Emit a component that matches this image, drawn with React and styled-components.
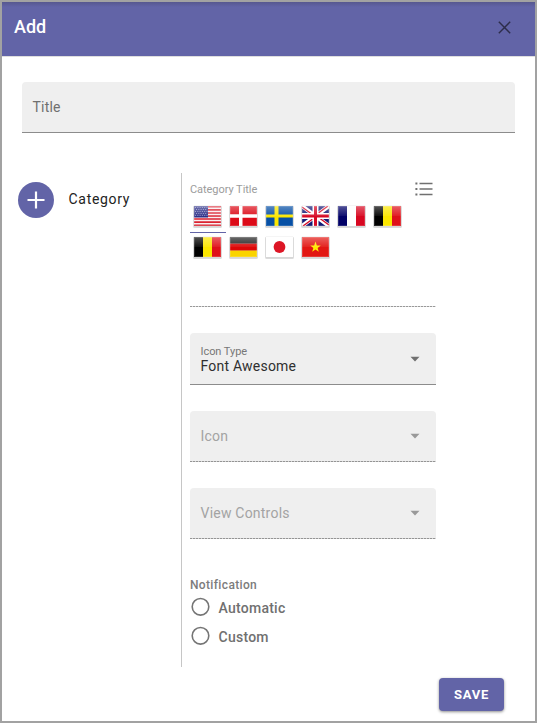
import React from "react";
import styled, { createGlobalStyle } from "styled-components";

const Global = createGlobalStyle`
  *, *::before, *::after { box-sizing: border-box; }
  body { margin: 0; font-family: Roboto, sans-serif; background: #fff; color: #2b2b2b; }
`;

const Dialog = styled.div`
  width: 537px;
  height: 723px;
  border: 2px solid #a2a2a2;
  background: #fff;
  display: flex;
  flex-direction: column;
`;

const Header = styled.header`
  height: 55px;
  flex: none;
  display: flex;
  align-items: center;
  justify-content: space-between;
  padding: 0 24px 4px 12px;
  background: linear-gradient(#56578f 0, #6264a7 5px);
  border-bottom: 1px solid #dedede;
`;

const Heading = styled.h1`
  margin: 0;
  font-size: 18px;
  line-height: 24px;
  font-weight: 500;
  color: #fff;
`;

const IconButton = styled.button`
  display: flex;
  padding: 0;
  border: 0;
  background: none;
  color: inherit;
`;

const Field = styled.div`
  height: ${(p) => p.$height || 51}px;
  display: flex;
  align-items: center;
  justify-content: space-between;
  padding: 0 16px 0 10.5px;
  background: #efefef;
  border-bottom: 1px solid #8c8c8c;
  border-radius: 4px 4px 0 0;
`;

const TitleField = styled(Field)`
  margin: 25px 20px 0;
`;

const Label = styled.span`
  font-size: 14px;
  line-height: 20px;
  letter-spacing: 0.22px;
  color: ${(p) => (p.$muted ? "#a3a3a3" : "#707070")};
`;

const Content = styled.main`
  flex: none;
  display: flex;
  margin-top: 40px;
  height: 494px;
`;

const Sidebar = styled.aside`
  width: 180px;
  flex: none;
  border-right: 1px solid #c6c6c6;
  padding: 9px 0 0 16px;
`;

const CategoryRow = styled.div`
  display: flex;
  align-items: center;
  gap: 14.5px;
`;

const AddButton = styled.button`
  width: 36px;
  height: 36px;
  padding: 0;
  border: 0;
  border-radius: 50%;
  background: #6264a7;
  display: flex;
  align-items: center;
  justify-content: center;
`;

const CategoryName = styled.span`
  font-size: 14px;
  line-height: 20px;
  letter-spacing: 0.7px;
  margin-top: -2px;
  color: #222;
`;

const Form = styled.section`
  width: 246px;
  margin-left: 8px;
  display: flex;
  flex-direction: column;
`;

const TitleSection = styled.div`
  height: 134px;
  display: flex;
  flex-direction: column;
`;

const TitleBar = styled.div`
  display: flex;
  align-items: center;
  justify-content: space-between;
  height: 32px;
`;

const Caption = styled.span`
  font-size: 11px;
  line-height: 14px;
  letter-spacing: -0.05px;
  padding-top: ${(p) => (p.$muted ? 2 : 0)}px;
  color: ${(p) => (p.$muted ? "#9c9c9c" : "#777")};
`;

const FlagList = styled.div`
  display: grid;
  grid-template-columns: repeat(6, 36px);
  grid-template-rows: 28px 28px;
  row-gap: 3px;
`;

const FlagTab = styled.div`
  padding: 0 3px;
  border-bottom: 1px solid ${(p) => (p.$active ? "#6264a7" : "transparent")};
`;

const FlagSvg = styled.svg`
  display: block;
`;

const DottedLine = styled.div`
  height: 1px;
  margin-top: auto;
  background: repeating-linear-gradient(90deg, #999 0 2px, #ddd 2px 3px);
`;

const SelectStack = styled.div`
  display: flex;
  flex-direction: column;
  gap: 26px;
  margin-top: 26px;
`;

const SelectField = styled(Field)`
  ${(p) =>
    p.$disabled &&
    `border-bottom: 0;
     padding-bottom: 1px;
     background: repeating-linear-gradient(90deg, #949494 0 2px, #d2d2d2 2px 3px) bottom / 100% 1px no-repeat #efefef;`}
`;

const SelectText = styled.div`
  display: flex;
  flex-direction: column;
  padding-top: 1px;
`;

const SelectValue = styled.span`
  font-size: 14px;
  line-height: 15px;
  letter-spacing: 0.22px;
  color: #2f2f2f;
`;

const RadioGroup = styled.div`
  margin-top: 38px;
  display: flex;
  flex-direction: column;
`;

const GroupTitle = styled.span`
  font-size: 12px;
  line-height: 16px;
  font-weight: 500;
  letter-spacing: 0.35px;
  margin-bottom: -1px;
  color: #7c7c7c;
`;

const RadioRow = styled.label`
  display: flex;
  align-items: center;
  gap: 8.5px;
  height: 29px;
  padding-left: 1px;
  font-size: 14px;
  font-weight: 500;
  letter-spacing: 0.25px;
  color: #707070;
`;

const RadioIcon = styled.svg`
  display: block;
  flex: none;
`;

const RadioText = styled.span`
  padding-top: 2px;
`;

const Footer = styled.footer`
  display: flex;
  justify-content: flex-end;
  padding: 11px 31px 0 0;
`;

const SaveButton = styled.button`
  width: 65px;
  height: 33px;
  padding: 0;
  border: 0;
  border-radius: 4px;
  background: #6264a7;
  box-shadow: 0 1px 3px rgba(0, 0, 0, 0.45);
  color: #fff;
  font: 700 13px/33px Roboto, sans-serif;
  letter-spacing: 0.8px;
`;

const flags = {
  us: (
    <>
      <path fill="#f9eef0" d="M0 0h27v20H0z" />
      <path stroke="#da2331" strokeWidth="1.55" d="M0 .8h27M0 3.85h27M0 6.9h27M0 9.95h27M0 13h27M0 16.1h27M0 19.2h27" />
      <path fill="#2d3088" d="M0 0h14v11.5H0z" />
      <path stroke="#b9bbe0" strokeWidth=".7" strokeDasharray="1 1.3" d="M1 1.5h12.5M2 3.5h11.5M1 5.5h12.5M2 7.5h11.5M1 9.4h12.5" />
    </>
  ),
  dk: (
    <>
      <path fill="#dc0b18" d="M0 0h27v20H0z" />
      <path fill="#fff" d="M9 0h3.5v20H9zM0 8.3h27v3.5H0z" />
    </>
  ),
  se: (
    <>
      <path fill="#0750a5" d="M0 0h27v20H0z" />
      <path fill="#fbe600" d="M8.5 0h4v20h-4zM0 8.5h27v3H0z" />
    </>
  ),
  gb: (
    <>
      <path fill="#141a74" d="M0 0h27v20H0z" />
      <path stroke="#fff" strokeWidth="4" d="M0 0l27 20M27 0L0 20" />
      <path stroke="#d60a25" strokeWidth="1.4" d="M0 1l11 8M26 0L15 8M27 19L16 11M1 20l11-8" />
      <path fill="#fff" d="M10.5 0h6v20h-6zM0 7h27v6H0z" />
      <path fill="#d60a25" d="M12 0h3v20h-3zM0 8.5h27v3H0z" />
    </>
  ),
  fr: (
    <>
      <path fill="#000067" d="M0 0h9v20H0z" />
      <path fill="#fff" d="M9 0h9v20H9z" />
      <path fill="#d70720" d="M18 0h9v20h-9z" />
    </>
  ),
  be: (
    <>
      <path fill="#000" d="M0 0h9v20H0z" />
      <path fill="#fbe600" d="M9 0h9v20H9z" />
      <path fill="#df1119" d="M18 0h9v20h-9z" />
    </>
  ),
  de: (
    <>
      <path fill="#222" d="M0 0h27v6.7H0z" />
      <path fill="#dc0808" d="M0 6.7h27v7H0z" />
      <path fill="#fad400" d="M0 13.6h27V20H0z" />
    </>
  ),
  jp: (
    <>
      <path fill="#fff" d="M0 0h27v20H0z" />
      <circle cx="13.5" cy="10" r="5.9" fill="#dd1625" />
    </>
  ),
  vn: (
    <>
      <path fill="#e21713" d="M0 0h27v20H0z" />
      <path fill="#ffeb00" d="M13.5 4.6l1.35 3.8 3.9.05-3.1 2.5 1.15 3.9-3.3-2.3-3.3 2.3 1.15-3.9-3.1-2.5 3.9-.05z" />
    </>
  ),
};

function Flag({ country }) {
  return (
    <FlagSvg width="30" height="24" viewBox="0 0 30 24" aria-label={country}>
      <rect x=".2" y="1.8" width="28.6" height="21.2" rx="1.2" fill="#000" opacity=".14" />
      <rect x=".4" y=".8" width="28.2" height="21" rx=".7" fill="#d6d6d6" />
      <svg x="1" y="1" width="27" height="20" viewBox="0 0 27 20">
        {flags[country]}
        <linearGradient id="flag-gloss" x1="0" y1="0" x2="0" y2="1">
          <stop offset="0" stopColor="#fff" stopOpacity=".32" />
          <stop offset="1" stopColor="#fff" stopOpacity=".06" />
        </linearGradient>
        <path
          fill={country === "jp" ? "none" : "url(#flag-gloss)"}
          d="M0 0h27v10H0z"
        />
        <path d="M.5.5h26v19H.5z" fill="none" stroke="#fff" strokeOpacity=".15" />
      </svg>
    </FlagSvg>
  );
}

function Arrow({ muted }) {
  return (
    <svg width="10" height="6" viewBox="0 0 10 6" aria-hidden="true">
      <path d="M.5.7h9L5 5.5z" fill={muted ? "#999" : "#707070"} />
    </svg>
  );
}

function Select({ label, value, disabled }) {
  return (
    <SelectField $disabled={disabled} $height={disabled ? 51 : 52}>
      {value ? (
        <SelectText>
          <Caption>{label}</Caption>
          <SelectValue>{value}</SelectValue>
        </SelectText>
      ) : (
        <Label $muted>{label}</Label>
      )}
      <Arrow muted={disabled} />
    </SelectField>
  );
}

const countries = ["us", "dk", "se", "gb", "fr", "be", "be", "de", "jp", "vn"];

export default function App() {
  return (
    <Dialog>
      <Global />
      <Header>
        <Heading>Add</Heading>
        <IconButton aria-label="Close">
          <svg width="13" height="13" viewBox="0 0 13 13">
            <path d="M.8.8l11.4 11.4M12.2.8L.8 12.2" stroke="#2d2d4a" strokeWidth="1.4" />
          </svg>
        </IconButton>
      </Header>
      <TitleField>
        <Label>Title</Label>
      </TitleField>
      <Content>
        <Sidebar>
          <CategoryRow>
            <AddButton aria-label="Add category">
              <svg width="18" height="18" viewBox="0 0 18 18">
                <path d="M9 .5v17M.5 9h17" stroke="#fff" strokeWidth="2.2" />
              </svg>
            </AddButton>
            <CategoryName>Category</CategoryName>
          </CategoryRow>
        </Sidebar>
        <Form>
          <TitleSection>
            <TitleBar>
              <Caption $muted>Category Title</Caption>
              <IconButton aria-label="Languages">
                <svg width="21" height="14" viewBox="0 0 21 14">
                  <path d="M4.5 1.5h13M4.5 7h13M4.5 12.5h13" stroke="#707070" strokeWidth="1.5" />
                  <path d="M.4 1.5h2M.4 7h2M.4 12.5h2" stroke="#707070" strokeWidth="2" />
                </svg>
              </IconButton>
            </TitleBar>
            <FlagList>
              {countries.map((country, i) => (
                <FlagTab key={i} $active={i === 0}>
                  <Flag country={country} />
                </FlagTab>
              ))}
            </FlagList>
            <DottedLine />
          </TitleSection>
          <SelectStack>
            <Select label="Icon Type" value="Font Awesome" />
            <Select label="Icon" disabled />
            <Select label="View Controls" disabled />
          </SelectStack>
          <RadioGroup>
            <GroupTitle>Notification</GroupTitle>
            {["Automatic", "Custom"].map((option) => (
              <RadioRow key={option}>
                <RadioIcon width="19" height="19" viewBox="0 0 19 19">
                  <circle cx="9.5" cy="9.8" r="8.3" fill="none" stroke="#757575" strokeWidth="1.6" />
                </RadioIcon>
                <RadioText>{option}</RadioText>
              </RadioRow>
            ))}
          </RadioGroup>
        </Form>
      </Content>
      <Footer>
        <SaveButton>SAVE</SaveButton>
      </Footer>
    </Dialog>
  );
}
